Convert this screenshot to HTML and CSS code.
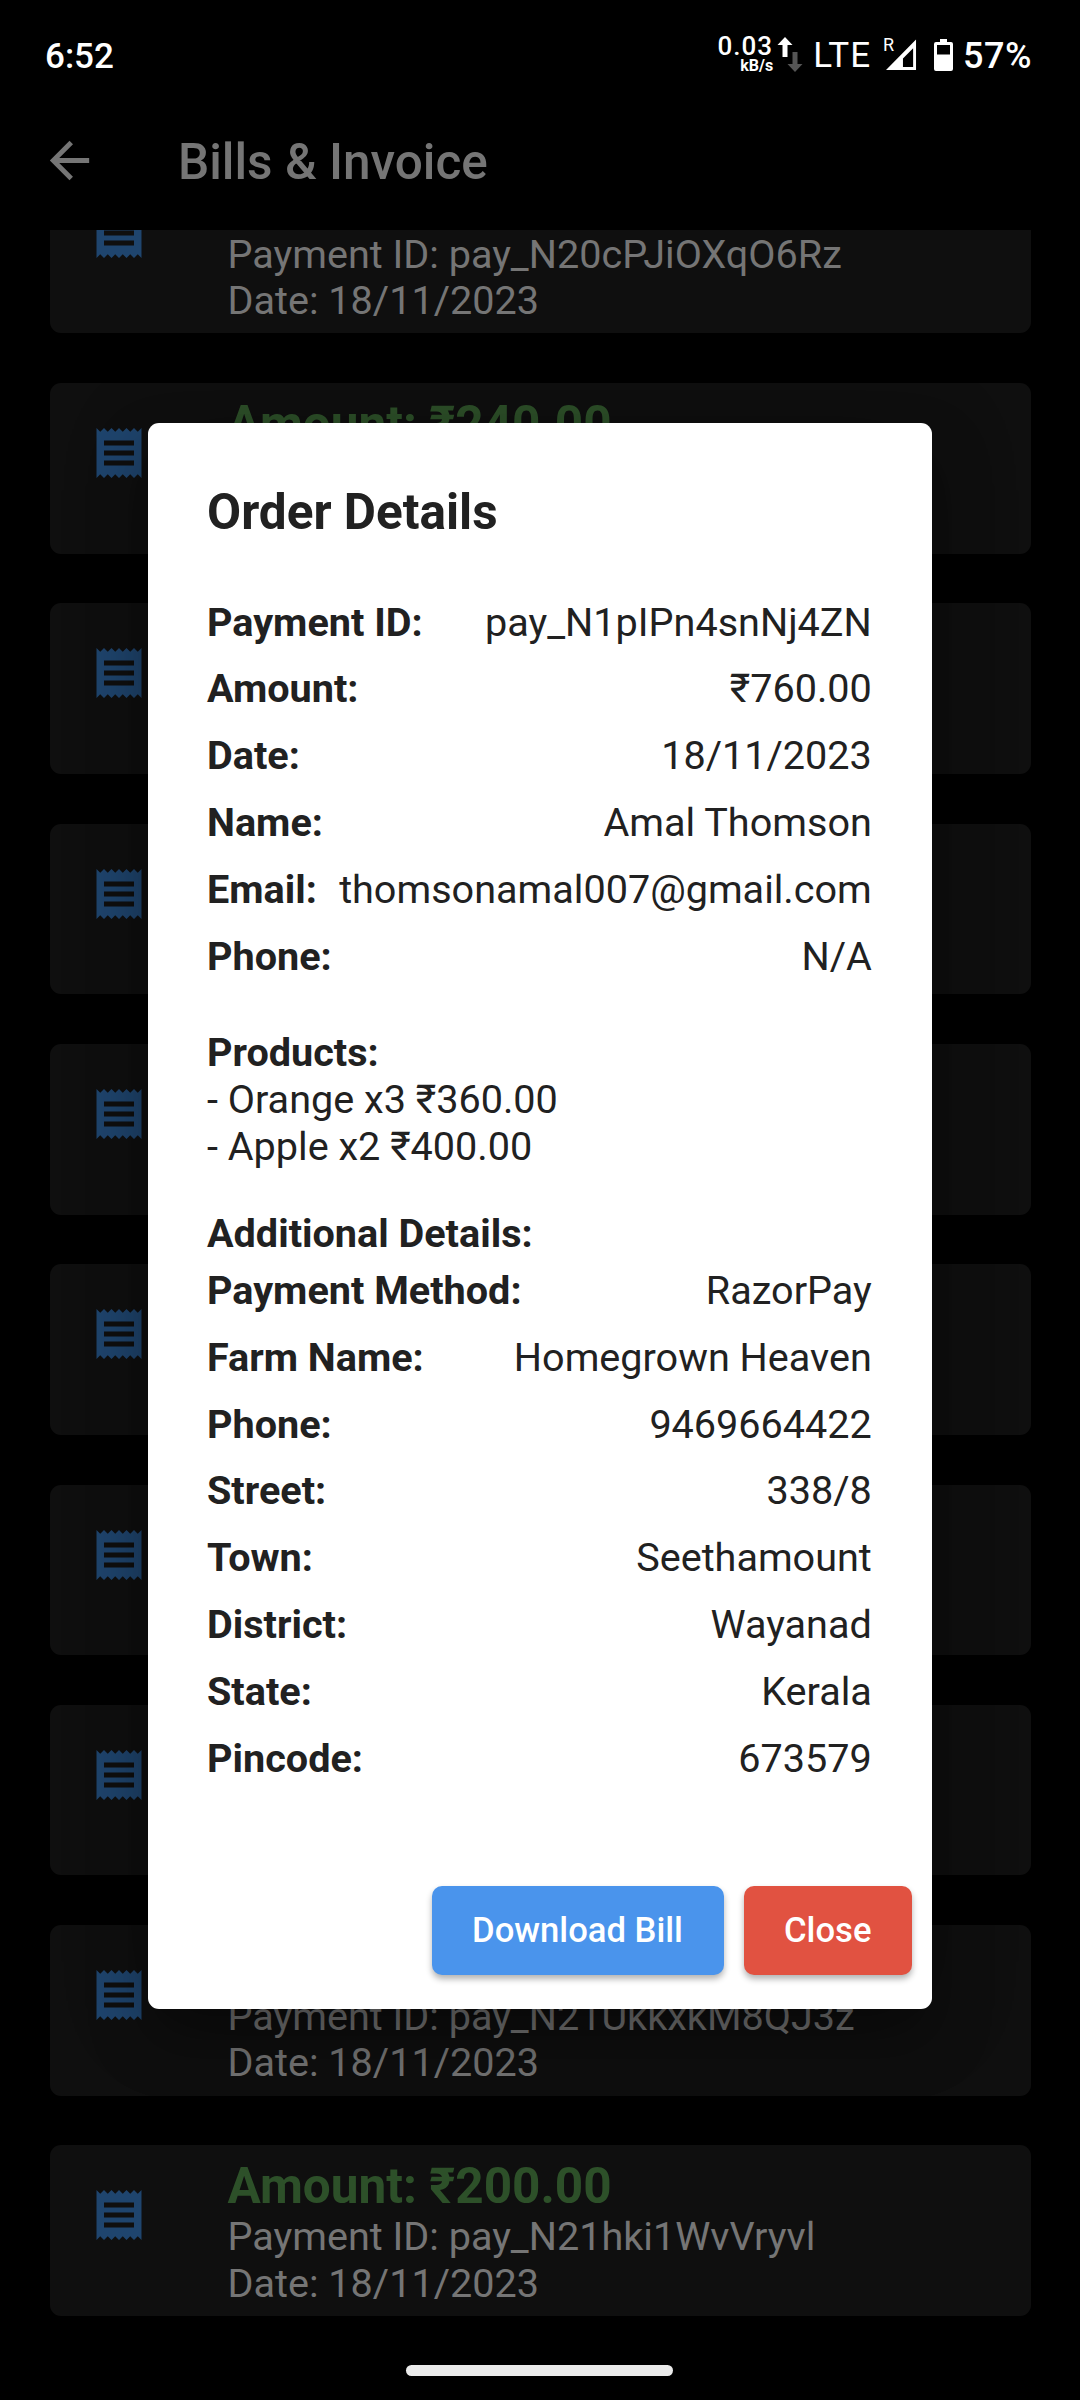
FILE: index.html
```html
<!DOCTYPE html>
<html lang="en">
<head>
<meta charset="utf-8">
<title>Bills &amp; Invoice</title>
<link rel="stylesheet" href="styles.css">
</head>
<body>
<svg class="defs" width="0" height="0">
  <symbol id="receipt" viewBox="0 0 24 24"><path d="M18 17H6v-2h12v2zm0-4H6v-2h12v2zm0-4H6V7h12v2zM3 22l1.5-1.5L6 22l1.5-1.5L9 22l1.5-1.5L12 22l1.5-1.5L15 22l1.5-1.5L18 22l1.5-1.5L21 22V2l-1.5 1.5L18 2l-1.5 1.5L15 2l-1.5 1.5L12 2l-1.5 1.5L9 2 7.5 3.5 6 2 4.5 3.5 3 2v20z"/></symbol>
</svg>
<div class="screen">
  <header class="status">
    <span class="clock">6:52</span>
    <div class="speed"><span class="rate">0.03</span><span class="unit">kB/s</span></div>
    <svg class="updown" viewBox="0 0 26 36"><path fill="#fff" d="M8 0l7.500 8h-5v12h-5V8h-5z"/><path fill="#555" d="M18 35l-7.500-8h5V15h5v12h5z"/></svg>
    <span class="network">LTE</span>
    <div class="signal">
      <span class="roaming">R</span>
      <svg viewBox="0 0 32 32"><path fill="#fff" fill-rule="evenodd" d="M0 31.500L31 0v31.500zM17.500 28.500H28V9L17.500 19.500z"/></svg>
    </div>
    <svg class="battery" viewBox="0 0 19 32"><path fill="#fff" fill-rule="evenodd" d="M6 0h7v3h4a2 2 0 0 1 2 2v25a2 2 0 0 1-2 2H2a2 2 0 0 1-2-2V5a2 2 0 0 1 2-2h4zM3 6v9.500h13V6z"/></svg>
    <span class="percent">57%</span>
  </header>
  <div class="appbar">
    <svg class="back" viewBox="0 0 24 24"><path d="M20 11H7.830l5.590-5.590L12 4l-8 8 8 8 1.410-1.410L7.830 13H20v-2z"/></svg>
    <h1>Bills &amp; Invoice</h1>
  </div>
  <main class="list">
    <article class="card"><svg><use href="#receipt"/></svg><div class="info info-end"><p>Payment ID: pay_N20cPJiOXqO6Rz</p><p>Date: 18/11/2023</p></div></article>
    <article class="card"><svg><use href="#receipt"/></svg><div class="info"><h2>Amount: ₹240.00</h2></div></article>
    <article class="card"><svg><use href="#receipt"/></svg></article>
    <article class="card"><svg><use href="#receipt"/></svg></article>
    <article class="card"><svg><use href="#receipt"/></svg></article>
    <article class="card"><svg><use href="#receipt"/></svg></article>
    <article class="card"><svg><use href="#receipt"/></svg></article>
    <article class="card"><svg><use href="#receipt"/></svg></article>
    <article class="card"><svg><use href="#receipt"/></svg><div class="info info-end"><p>Payment ID: pay_N21UkkxkM8QJ3z</p><p>Date: 18/11/2023</p></div></article>
    <article class="card"><svg><use href="#receipt"/></svg><div class="info"><h2>Amount: ₹200.00</h2><p>Payment ID: pay_N21hki1WvVryvl</p><p>Date: 18/11/2023</p></div></article>
  </main>
  <footer class="nav"><span class="pill"></span></footer>

  <section class="dialog">
    <h2 class="title">Order Details</h2>
    <dl class="rows">
      <div><dt>Payment ID:</dt><dd>pay_N1pIPn4snNj4ZN</dd></div>
      <div><dt>Amount:</dt><dd>₹760.00</dd></div>
      <div><dt>Date:</dt><dd>18/11/2023</dd></div>
      <div><dt>Name:</dt><dd>Amal Thomson</dd></div>
      <div><dt>Email:</dt><dd>thomsonamal007@gmail.com</dd></div>
      <div><dt>Phone:</dt><dd>N/A</dd></div>
    </dl>
    <div class="products">
      <h3>Products:</h3>
      <p>- Orange x3 ₹360.00</p>
      <p>- Apple x2 ₹400.00</p>
    </div>
    <h3>Additional Details:</h3>
    <dl class="rows">
      <div><dt>Payment Method:</dt><dd>RazorPay</dd></div>
      <div><dt>Farm Name:</dt><dd>Homegrown Heaven</dd></div>
      <div><dt>Phone:</dt><dd>9469664422</dd></div>
      <div><dt>Street:</dt><dd>338/8</dd></div>
      <div><dt>Town:</dt><dd>Seethamount</dd></div>
      <div><dt>District:</dt><dd>Wayanad</dd></div>
      <div><dt>State:</dt><dd>Kerala</dd></div>
      <div><dt>Pincode:</dt><dd>673579</dd></div>
    </dl>
    <div class="actions">
      <button class="download">Download Bill</button>
      <button class="close">Close</button>
    </div>
  </section>
</div>
</body>
</html>
```
FILE: styles.css
```css
* { box-sizing: border-box; }
body, h1, h2, h3, p, dl, dd { margin: 0; }
body { background: #000; font-family: Roboto, "Noto Sans", sans-serif; }
.defs { display: none; }

.screen {
  position: relative;
  width: 1080px;
  height: 2400px;
  overflow: hidden;
  display: flex;
  flex-direction: column;
  background: #000;
}

/* status bar */
.status {
  height: 110px;
  flex: none;
  display: flex;
  align-items: center;
  padding: 0 48px 0 45px;
  color: #fff;
  font-weight: 500;
  font-size: 35px;
  line-height: 41px;
}
.clock { margin-right: auto; }
.speed {
  display: flex;
  flex-direction: column;
  align-items: flex-end;
  margin-right: 4px;
}
.rate { font-size: 26px; line-height: 24px; margin-top: -3px; letter-spacing: 1px; }
.unit { font-size: 16px; line-height: 16px; font-weight: 700; }
.updown { width: 26px; height: 36px; margin-right: 10px; }
.network { margin-right: 13px; font-weight: 400; letter-spacing: 1px; }
.percent, .clock { position: relative; top: 1px; }
.signal { position: relative; width: 33px; height: 32px; margin-right: 17px; }
.signal svg { position: absolute; left: 2px; top: 0; width: 31px; height: 32px; }
.roaming { position: absolute; left: -1px; top: -3px; font-size: 18px; line-height: 18px; font-weight: 400; }
.battery { width: 19px; height: 32px; margin-right: 10px; }
.percent { font-size: 36px; letter-spacing: .5px; }

/* app bar */
.appbar {
  height: 120px;
  flex: none;
  display: flex;
  align-items: center;
  padding: 0 39.500px 19px;
  gap: 79.500px;
}
.back { width: 59px; height: 59px; fill: #757575; }
.appbar h1 { font-size: 49.500px; line-height: 59px; font-weight: 500; color: #757575; padding-top: 3px; }

/* invoice list */
.list {
  flex: 1;
  min-height: 0;
  overflow: hidden;
  display: flex;
  flex-direction: column;
  gap: 49.800px;
  padding: 0 49.500px;
}
.card {
  height: 170.500px;
  flex: none;
  display: flex;
  padding: 12.500px 39px 8.800px;
  gap: 79px;
  background: #0f0f0f;
  border-radius: 11px;
}
.card:first-child { margin-top: -67.200px; }
.card svg { width: 60px; height: 60px; margin-top: 27.500px; flex: none; fill: #1f456e; }
.info { display: flex; flex-direction: column; color: #757575; }
.info-end { justify-content: flex-end; }
.info h2 { font-size: 49.500px; line-height: 56.500px; font-weight: 700; color: #2d5029; }
.info p { font-size: 39.600px; line-height: 46.500px; white-space: nowrap; }

.nav { height: 84px; flex: none; display: flex; justify-content: center; padding: 49px 1px 0 0; }
.pill { width: 267px; height: 11px; border-radius: 6px; background: #ebebeb; }

/* order dialog */
.dialog {
  position: absolute;
  left: 147.500px;
  top: 422.500px;
  width: 784.500px;
  height: 1586.500px;
  display: flex;
  flex-direction: column;
  padding: 60px 20px 34px 59.500px;
  background: #fff;
  color: #212121;
  border-radius: 11px;
  box-shadow: 0 30px 60px rgba(0, 0, 0, .3), 0 10px 90px rgba(0, 0, 0, .2);
  font-size: 39.600px;
  line-height: 46.900px;
}
.title { font-size: 49.500px; line-height: 59px; font-weight: 700; margin-bottom: 48px; }
.rows { padding-right: 40.200px; }
.rows div { display: flex; justify-content: space-between; padding: 10px 0; }
.dialog h3, dt { font-size: 39.600px; font-weight: 700; }
dd, .dialog p { white-space: nowrap; }
.products { margin: 39.500px 0 39.700px; }
.actions { margin-top: auto; display: flex; justify-content: flex-end; gap: 20px; }
.actions button {
  height: 89.500px;
  padding: 0;
  border: 0;
  border-radius: 10px;
  font: 500 34.650px/41px Roboto, sans-serif;
  color: #fff;
  box-shadow: 0 4px 6px rgba(0, 0, 0, .3);
}
.actions .download { width: 292px; background: #4a94ec; }
.actions .close { width: 168.500px; background: #e15241; }
```
